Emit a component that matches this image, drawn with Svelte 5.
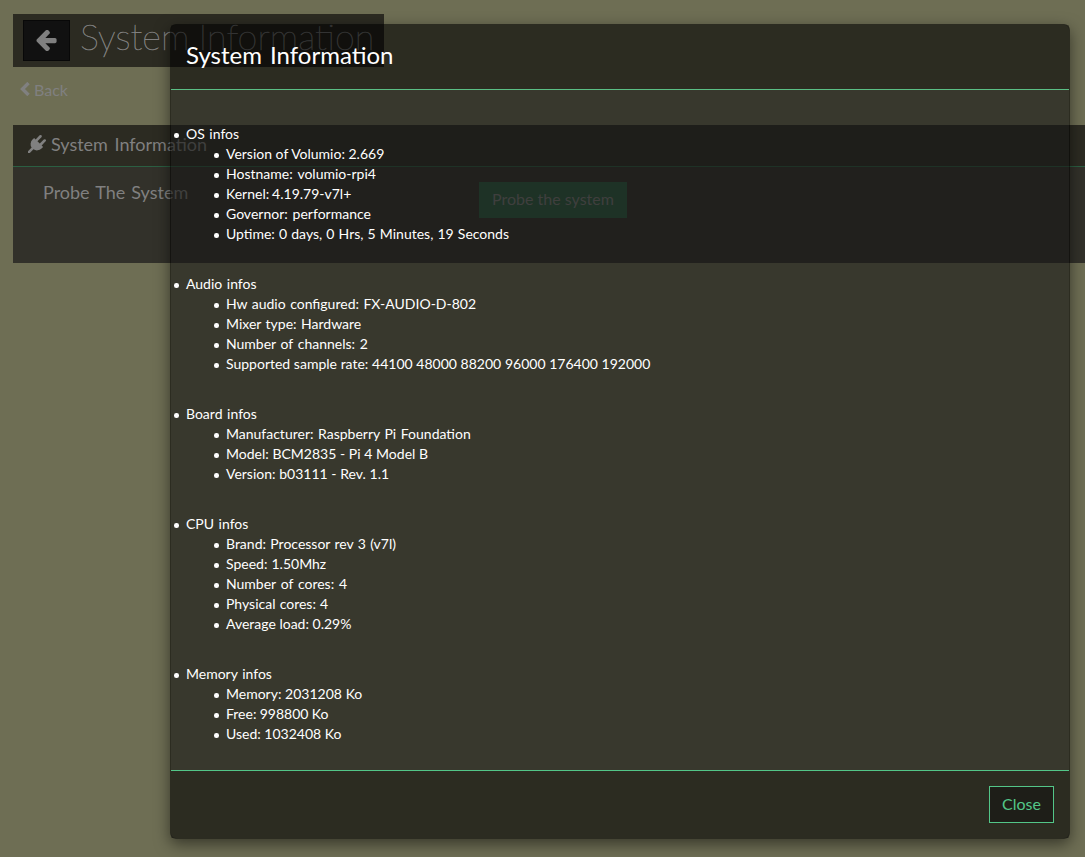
<script>
  // gap: extra word spacing of the line, in pixels
  const groups = [
    { title: 'OS infos', items: [
      { text: 'Version of Volumio: 2.669', gap: 0 },
      { text: 'Hostname: volumio-rpi4', gap: 1.5 },
      { text: 'Kernel: 4.19.79-v7l+', gap: -0.7 },
      { text: 'Governor: performance', gap: 1.3 },
      { text: 'Uptime: 0 days, 0 Hrs, 5 Minutes, 19 Seconds', gap: 0.55 }] },
    { title: 'Audio infos', items: [
      { text: 'Hw audio configured: FX-AUDIO-D-802', gap: 0.9 },
      { text: 'Mixer type: Hardware', gap: 0.9 },
      { text: 'Number of channels: 2', gap: 1.1 },
      { text: 'Supported sample rate: 44100 48000 88200 96000 176400 192000', gap: 0.1 }] },
    { title: 'Board infos', items: [
      { text: 'Manufacturer: Raspberry Pi Foundation', gap: 1 },
      { text: 'Model: BCM2835 - Pi 4 Model B', gap: 0.1 },
      { text: 'Version: b03111 - Rev. 1.1', gap: 0.1 }] },
    { title: 'CPU infos', items: [
      { text: 'Brand: Processor rev 3 (v7l)', gap: 0.75 },
      { text: 'Speed: 1.50Mhz', gap: 0.5 },
      { text: 'Number of cores: 4', gap: 1.2 },
      { text: 'Physical cores: 4', gap: 0.6 },
      { text: 'Average load: 0.29%', gap: 0 }] },
    { title: 'Memory infos', items: [
      { text: 'Memory: 2031208 Ko', gap: 0.1 },
      { text: 'Free: 998800 Ko', gap: -0.3 },
      { text: 'Used: 1032408 Ko', gap: 0 }] }
  ];
</script>

<div class="page">
  <header class="bar">
    <button class="arrow" aria-label="Back">
      <svg width="21" height="21" viewBox="0 0 1536 1536"><path fill="#808080" d="M1536 768v128q0 53-32.500 90.500T1419 1024H715l293 294q38 36 38 90t-38 90l-75 76q-37 37-90 37-52 0-91-37L101 922Q64 885 64 832q0-52 37-91L752 91q38-38 91-38 52 0 90 38l75 74q38 38 38 91t-38 91L715 640h704q52 0 84.500 37.500T1536 768z" transform="translate(-30 -64)"/></svg>
    </button>
    <h1>System Information</h1>
  </header>
  <div class="back">
    <svg width="10" height="14" viewBox="0 0 10 14"><path d="M8.500 1 2.500 7l6 6" fill="none" stroke="#808080" stroke-width="3.400"/></svg>
    <span>Back</span>
  </div>
  <section class="panel">
    <h2>
      <svg width="18" height="18" viewBox="0 0 1792 1792"><path fill="#808080" d="M1755 453q37 38 37 90.500t-37 90.500l-401 400 150 150-160 160q-163 163-389.500 186.500T543 1430l-362 362H0v-181l362-362q-124-185-100.500-411.500T448 448l160-160 150 150 400-401q38-37 91-37t90 37 37 90.500-37 90.500L939 619l234 234 401-400q38-37 91-37t90 37z"/></svg>
      <span>System Information</span>
    </h2>
    <div class="row">
      <span class="label">Probe The System</span>
      <button class="probe">Probe the system</button>
    </div>
  </section>
</div>

<div class="modal">
  <div class="mhead">System Information</div>
  <div class="mbody">
    <ul>
      {#each groups as g}
        <li class="group">{g.title}
          <ul class="sub">
            {#each g.items as item}<li style:word-spacing="{item.gap}px">{item.text}</li>{/each}
          </ul>
        </li>
      {/each}
    </ul>
  </div>
  <div class="mfoot"><button class="close">Close</button></div>
</div>

<style>
  :global(body) { margin: 0; background: #6e6e54; overflow: hidden; }
  .page, .modal { font-family: Lato, sans-serif; box-sizing: border-box; }
  .page { height: 857px; padding: 14px 0 0 13px; color: #808080; overflow: hidden; }
  button { font-family: inherit; box-sizing: border-box; margin: 0; border-radius: 0; }
  .bar { width: 371px; height: 53px; box-sizing: border-box; padding: 6px 10px; display: flex; background: #2c2b22; }
  .arrow { flex: none; width: 47px; height: 41px; padding: 0; border: 1px solid #080808; background: #111; display: flex; align-items: center; justify-content: center; }
  h1 { margin: -4px 0 0 10px; font-size: 36px; line-height: 40px; font-weight: 100; word-spacing: -1px; -webkit-text-stroke: .5px #808080; white-space: nowrap; }
  .back { display: flex; align-items: center; height: 24px; margin: 10px 0 0 7px; gap: 4px; font-size: 16px; }
  .panel { margin-top: 24px; height: 138px; background: #32312a; }
  h2 { margin: 0; height: 42px; box-sizing: border-box; padding: 0 0 3px 15px; display: flex; align-items: center; gap: 5px; font-size: 18px; font-weight: 400; word-spacing: 2px; background: #2c2b22; border-bottom: 1px solid #2b5f42; white-space: nowrap; }
  .row { display: flex; padding: 15px 0 0 30px; font-size: 18px; line-height: 20px; word-spacing: 1.500px; }
  .label { width: 436px; }
  .probe { width: 148px; height: 36px; padding: 0 0 3px; border: 0; background: #2b5f42; color: #808080; font-size: 16px; }
  .modal { position: absolute; left: 170px; top: 24px; width: 900px; height: 815px; border: 1px solid rgba(0,0,0,.2); border-radius: 6px; background: rgba(0,0,0,.5); box-shadow: 0 5px 15px rgba(0,0,0,.5); color: #fff; display: flex; flex-direction: column; }
  .mhead { flex: none; height: 65px; box-sizing: border-box; padding: 13px 15px; font-size: 24px; line-height: 34px; word-spacing: 2px; background: rgba(0,0,0,.2); border-bottom: 1px solid #5bbf85; }
  .mbody { flex: 1; min-height: 0; padding: 34px 15px 0; font-size: 14px; line-height: 20px; background: rgba(62,61,56,.23); }
  ul { margin: 0; padding: 0; list-style: none; }
  li::before { content: ''; display: inline-block; width: 4.600px; height: 4.600px; margin: 0 7.200px 0 -11.800px; border-radius: 50%; background: #fff; vertical-align: 1px; }
  .sub { padding-left: 40px; }
  .group { margin-bottom: 30px; word-spacing: 1px; }
  .group:last-child { margin-bottom: 0; }
  .mfoot { flex: none; height: 68px; box-sizing: border-box; padding: 15px; display: flex; justify-content: flex-end; background: rgba(0,0,0,.2); border-top: 1px solid #53c688; }
  .close { width: 65px; height: 37px; padding: 0 0 2px; border: 1px solid #53c688; background: #1e1e18; color: #53c688; font-size: 16px; }
</style>
